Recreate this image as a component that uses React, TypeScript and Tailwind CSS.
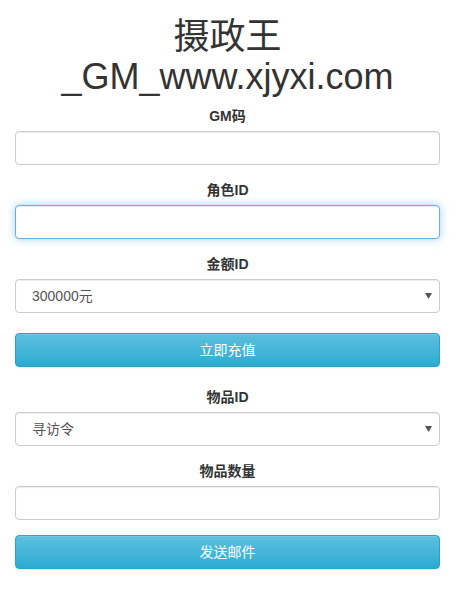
import React, { useState } from 'react'

const font = "font-['Liberation_Sans','Noto_Sans_CJK_SC',sans-serif]"

const Label: React.FC<{ children: React.ReactNode }> = ({ children }) => (
    <label className="block text-center text-[14px] leading-[20px] font-bold text-[#333] mb-[5px]">{children}</label>
)

const baseCls = 'block w-full h-[34px] px-3 text-[14px] text-[#555] bg-white border rounded-[4px] outline-none'
const inputCls = `${baseCls} border-[#ccc] shadow-[inset_0_1px_1px_rgba(0,0,0,0.075)]`
const focusCls = `${baseCls} border-[#66afe9] shadow-[inset_0_1px_1px_rgba(0,0,0,0.075),0_0_8px_rgba(102,175,233,0.6)]`

const Select: React.FC<{ value: string; options: string[] }> = ({ value, options }) => {
    const [v, setV] = useState(value)
    return (
        <div className="relative">
            <select
                value={v}
                onChange={e => setV(e.target.value)}
                className={`${inputCls} appearance-none pl-[16px]`}
            >
                {options.map(o => (
                    <option key={o} value={o}>{o}</option>
                ))}
            </select>
            {/* 下拉箭头 */}
            <svg className="absolute right-[8px] top-[14px] pointer-events-none" width="7" height="6" viewBox="0 0 7 6">
                <path d="M0 0H7L3.5 6Z" fill="#555" />
            </svg>
        </div>
    )
}

const Button: React.FC<{ children: React.ReactNode }> = ({ children }) => (
    <button className="block w-full h-[34px] text-[14px] text-white rounded-[4px] border border-[#28a4c9] bg-gradient-to-b from-[#5bc0de] to-[#2aabd2] shadow-[inset_0_1px_0_rgba(255,255,255,0.15),0_1px_1px_rgba(0,0,0,0.075)]">
        {children}
    </button>
)

export default function App() {
    return (
        <div className={`${font} bg-white min-h-[603px] pl-[15px] pr-[19px]`}>
            <h1 className="text-center text-[36px] leading-[1.1] font-normal text-[#333] pt-[17px] mb-[10px]">
                摄政王
                <br />
                _GM_www.xjyxi.com
            </h1>

            <div className="mb-[15px]">
                <Label>GM码</Label>
                <input className={inputCls} />
            </div>

            <div className="mb-[15px]">
                <Label>角色ID</Label>
                <input className={focusCls} />
            </div>

            <div className="mb-[20px]">
                <Label>金额ID</Label>
                <Select value="300000元" options={['300000元', '100000元', '50000元']} />
            </div>

            <Button>立即充值</Button>

            <div className="mt-[20px] mb-[15px]">
                <Label>物品ID</Label>
                <Select value="寻访令" options={['寻访令']} />
            </div>

            <div className="mb-[15px]">
                <Label>物品数量</Label>
                <input className={inputCls} />
            </div>

            <Button>发送邮件</Button>
        </div>
    )
}
